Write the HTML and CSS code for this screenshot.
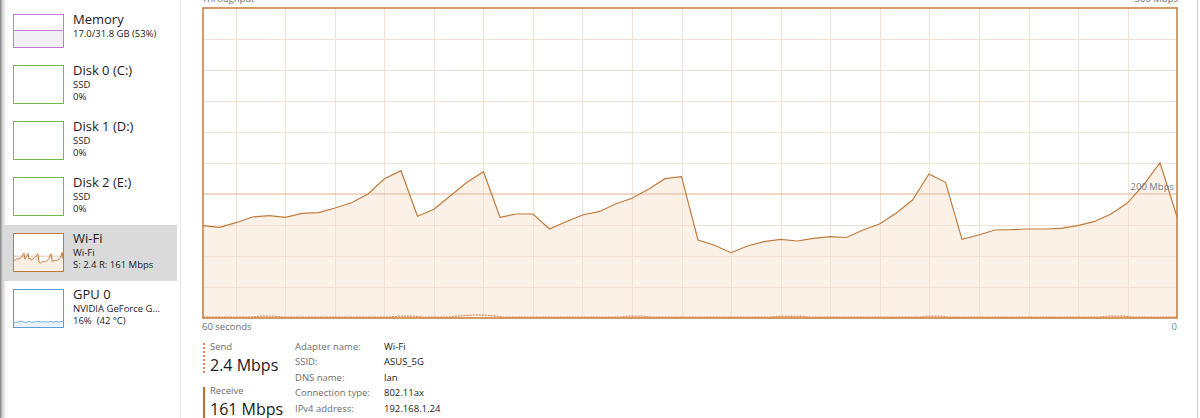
FILE: index.html
```html
<!DOCTYPE html>
<html lang="en">
<head>
  <meta charset="UTF-8">
  <title>Task Manager - Wi-Fi</title>
  <link rel="stylesheet" href="styles.css">
</head>
<body>

  <div class="app">
    <div class="sidebar">
      <div class="item item-mem">
        <div class="thumb thumb-mem"><div class="mem-used"></div></div>
        <div class="info">
          <div class="title">Memory</div>
          <div class="sub">17.0/31.8 GB (53%)</div>
        </div>
      </div>

      <div class="item">
        <div class="thumb thumb-disk"></div>
        <div class="info">
          <div class="title">Disk 0 (C:)</div>
          <div class="sub">SSD</div>
          <div class="sub">0%</div>
        </div>
      </div>

      <div class="item">
        <div class="thumb thumb-disk"></div>
        <div class="info">
          <div class="title">Disk 1 (D:)</div>
          <div class="sub">SSD</div>
          <div class="sub">0%</div>
        </div>
      </div>

      <div class="item">
        <div class="thumb thumb-disk"></div>
        <div class="info">
          <div class="title">Disk 2 (E:)</div>
          <div class="sub">SSD</div>
          <div class="sub">0%</div>
        </div>
      </div>

      <div class="item active">
        <div class="thumb thumb-net">
          <svg viewBox="0 0 976 312" preserveAspectRatio="none">
            <polygon class="mini-fill" points="1,218.7 17.5,220.3 34,215.7 50.5,210 67,208.7 83.5,210.3 100,206.3 116.5,205.7 133,201 149.5,195.7 166,187 182.5,171.7 199,163.7 215.5,209.3 232,202.3 248.5,188.7 265,175.3 281.5,164.7 298,210.3 314.5,207 331,207 347.5,222 364,214.7 380.5,208 397,204.7 413.5,197 430,191.3 446.5,182.3 463,171.7 479.5,169.7 496,233 512.5,238.3 529,245.7 545.5,239 562,234.7 578.5,232.3 595,234 611.5,231.3 628,229.7 644.5,230.5 661,223 677.5,217 694,206.3 710.5,193 727,167 743.5,175.3 760,232.3 776.5,228 793,223 809.5,222.7 826,222 842.5,222 859,221.3 875.5,218.7 892,214.7 908.5,207.3 925,196.3 941.5,178 958,155.7 975,209.7 975,312 1,312"/>
            <line class="mini-max" x1="0" y1="187" x2="976" y2="187"/>
            <polyline class="mini-line" points="1,218.7 17.5,220.3 34,215.7 50.5,210 67,208.7 83.5,210.3 100,206.3 116.5,205.7 133,201 149.5,195.7 166,187 182.5,171.7 199,163.7 215.5,209.3 232,202.3 248.5,188.7 265,175.3 281.5,164.7 298,210.3 314.5,207 331,207 347.5,222 364,214.7 380.5,208 397,204.7 413.5,197 430,191.3 446.5,182.3 463,171.7 479.5,169.7 496,233 512.5,238.3 529,245.7 545.5,239 562,234.7 578.5,232.3 595,234 611.5,231.3 628,229.7 644.5,230.5 661,223 677.5,217 694,206.3 710.5,193 727,167 743.5,175.3 760,232.3 776.5,228 793,223 809.5,222.7 826,222 842.5,222 859,221.3 875.5,218.7 892,214.7 908.5,207.3 925,196.3 941.5,178 958,155.7 975,209.7"/>
          </svg>
        </div>
        <div class="info">
          <div class="title">Wi-Fi</div>
          <div class="sub">Wi-Fi</div>
          <div class="sub">S: 2.4 R: 161 Mbps</div>
        </div>
      </div>

      <div class="item">
        <div class="thumb thumb-gpu">
          <svg viewBox="0 0 49 37" preserveAspectRatio="none">
            <polygon class="gpu-fill" points="0,32.5 3,32.2 5,31.6 7,31 9,32 12,32.3 15,31.6 18,32.2 21,31.9 24,31.4 27,32 30,31.7 33,32.1 36,31.5 39,32 42,31.6 45,32 49,31.2 49,37 0,37"/>
            <polyline class="gpu-line" points="0,32.5 3,32.2 5,31.6 7,31 9,32 12,32.3 15,31.6 18,32.2 21,31.9 24,31.4 27,32 30,31.7 33,32.1 36,31.5 39,32 42,31.6 45,32 49,31.2"/>
          </svg>
        </div>
        <div class="info">
          <div class="title">GPU 0</div>
          <div class="sub">NVIDIA GeForce G...</div>
          <div class="sub">16%&nbsp; (42 °C)</div>
        </div>
      </div>
    </div>

    <div class="main">
      <div class="chart-head">
        <span>Throughput</span>
        <span>300 Mbps</span>
      </div>

      <div class="chart">
        <svg width="976" height="312" viewBox="0 0 976 312">
          <polygon class="fill" points="1,218.7 17.5,220.3 34,215.7 50.5,210 67,208.7 83.5,210.3 100,206.3 116.5,205.7 133,201 149.5,195.7 166,187 182.5,171.7 199,163.7 215.5,209.3 232,202.3 248.5,188.7 265,175.3 281.5,164.7 298,210.3 314.5,207 331,207 347.5,222 364,214.7 380.5,208 397,204.7 413.5,197 430,191.3 446.5,182.3 463,171.7 479.5,169.7 496,233 512.5,238.3 529,245.7 545.5,239 562,234.7 578.5,232.3 595,234 611.5,231.3 628,229.7 644.5,230.5 661,223 677.5,217 694,206.3 710.5,193 727,167 743.5,175.3 760,232.3 776.5,228 793,223 809.5,222.7 826,222 842.5,222 859,221.3 875.5,218.7 892,214.7 908.5,207.3 925,196.3 941.5,178 958,155.7 975,209.7 975,311 1,311"/>

          <g class="grid">
            <line x1="34.5" y1="1" x2="34.5" y2="311"/>
            <line x1="83.5" y1="1" x2="83.5" y2="311"/>
            <line x1="133.5" y1="1" x2="133.5" y2="311"/>
            <line x1="182.5" y1="1" x2="182.5" y2="311"/>
            <line x1="232.5" y1="1" x2="232.5" y2="311"/>
            <line x1="281.5" y1="1" x2="281.5" y2="311"/>
            <line x1="331.5" y1="1" x2="331.5" y2="311"/>
            <line x1="380.5" y1="1" x2="380.5" y2="311"/>
            <line x1="430.5" y1="1" x2="430.5" y2="311"/>
            <line x1="480.5" y1="1" x2="480.5" y2="311"/>
            <line x1="529.5" y1="1" x2="529.5" y2="311"/>
            <line x1="579.5" y1="1" x2="579.5" y2="311"/>
            <line x1="628.5" y1="1" x2="628.5" y2="311"/>
            <line x1="678.5" y1="1" x2="678.5" y2="311"/>
            <line x1="727.5" y1="1" x2="727.5" y2="311"/>
            <line x1="777.5" y1="1" x2="777.5" y2="311"/>
            <line x1="827.5" y1="1" x2="827.5" y2="311"/>
            <line x1="876.5" y1="1" x2="876.5" y2="311"/>
            <line x1="926.5" y1="1" x2="926.5" y2="311"/>
            <line x1="1" y1="32.5" x2="975" y2="32.5"/>
            <line x1="1" y1="63.5" x2="975" y2="63.5"/>
            <line x1="1" y1="94.5" x2="975" y2="94.5"/>
            <line x1="1" y1="125.5" x2="975" y2="125.5"/>
            <line x1="1" y1="156.5" x2="975" y2="156.5"/>
            <line x1="1" y1="218.5" x2="975" y2="218.5"/>
            <line x1="1" y1="249.5" x2="975" y2="249.5"/>
            <line x1="1" y1="280.5" x2="975" y2="280.5"/>
          </g>

          <!-- 200 Mbps marker -->
          <line class="max-line" x1="1" y1="187" x2="975" y2="187"/>

          <!-- send (dotted) -->
          <polyline class="send-line" points="1,310 50,310 58,309.2 72,309.2 80,310 188,310 196,309.2 212,309.2 220,310 248,310 258,308.8 276,307.8 292,308.8 300,310 418,310 426,309.2 440,309.2 448,310 568,310 578,309.3 600,309.3 608,310 718,310 726,309.2 738,309.2 746,310 898,310 906,309.2 922,309.2 930,310 975,310"/>

          <!-- receive -->
          <polyline class="recv-line" points="1,218.7 17.5,220.3 34,215.7 50.5,210 67,208.7 83.5,210.3 100,206.3 116.5,205.7 133,201 149.5,195.7 166,187 182.5,171.7 199,163.7 215.5,209.3 232,202.3 248.5,188.7 265,175.3 281.5,164.7 298,210.3 314.5,207 331,207 347.5,222 364,214.7 380.5,208 397,204.7 413.5,197 430,191.3 446.5,182.3 463,171.7 479.5,169.7 496,233 512.5,238.3 529,245.7 545.5,239 562,234.7 578.5,232.3 595,234 611.5,231.3 628,229.7 644.5,230.5 661,223 677.5,217 694,206.3 710.5,193 727,167 743.5,175.3 760,232.3 776.5,228 793,223 809.5,222.7 826,222 842.5,222 859,221.3 875.5,218.7 892,214.7 908.5,207.3 925,196.3 941.5,178 958,155.7 975,209.7"/>

          <rect class="frame" x="1" y="1" width="974" height="310"/>
        </svg>
        <span class="max-label">200 Mbps</span>
      </div>

      <div class="chart-foot">
        <span>60 seconds</span>
        <span class="zero">0</span>
      </div>

      <div class="stats">
        <div class="rates">
          <div class="rate send">
            <div class="rate-label">Send</div>
            <div class="rate-value">2.4 Mbps</div>
          </div>
          <div class="rate recv">
            <div class="rate-label">Receive</div>
            <div class="rate-value">161 Mbps</div>
          </div>
        </div>

        <div class="props">
          <span class="key">Adapter name:</span><span class="val">Wi-Fi</span>
          <span class="key">SSID:</span><span class="val">ASUS_5G</span>
          <span class="key">DNS name:</span><span class="val">lan</span>
          <span class="key">Connection type:</span><span class="val">802.11ax</span>
          <span class="key">IPv4 address:</span><span class="val">192.168.1.24</span>
        </div>
      </div>
    </div>
  </div>

</body>
</html>
```

FILE: styles.css
```css
body {
  margin: 0;
  font-family: "Open Sans", "Noto Sans", sans-serif;
  color: #1b1b1b;
  background: #fff;
  overflow: hidden;
}

.app {
  display: flex;
  width: 1197px;
  height: 418px;
  border-right: 1px solid #cfcfcf;
  overflow: hidden;
}

/* left list */
.sidebar {
  width: 181px;
  flex-shrink: 0;
  border-right: 1px solid #e6e6e6;
  padding: 6px 3px 0 4px;
  box-sizing: border-box;
  background: linear-gradient(to right, #7c7c7c 0, #c8c8c8 2px, #f2f2f2 5px, #fff 8px);
}
.item {
  display: flex;
  align-items: flex-start;
  height: 56px;
  padding: 8px 0 0 9px;
  box-sizing: border-box;
}
.item-mem {
  height: 51px;
}
.item.active {
  background: #dadada;
}
.thumb {
  width: 51px;
  height: 39px;
  box-sizing: border-box;
  border: 1px solid;
  flex-shrink: 0;
  background: #fff;
}
.thumb svg {
  display: block;
  width: 49px;
  height: 37px;
}
.thumb-mem {
  height: 34px;
  border-color: #bf7dd3;
  display: flex;
  flex-direction: column;
}
.mem-used {
  margin-top: 15px;
  flex: 1;
  border-top: 1px solid #bf7dd3;
  background: #f0eff1;
}
.thumb-disk {
  border-color: #74bb4c;
}
.thumb-net {
  border-color: #c27a3c;
}
.thumb-gpu {
  border-color: #5d9fd3;
}
.mini-fill {
  fill: #fbeee2;
}
.mini-max {
  stroke: #e6c4a4;
  stroke-width: 1;
  vector-effect: non-scaling-stroke;
}
.mini-line {
  fill: none;
  stroke: #c27a3c;
  stroke-width: 1;
  vector-effect: non-scaling-stroke;
}
.gpu-fill {
  fill: #e9f2fa;
}
.gpu-line {
  fill: none;
  stroke: #5d9fd3;
  stroke-width: 0.8;
}
.info {
  margin: -3px 0 0 9px;
  white-space: nowrap;
}
.title {
  font-size: 13px;
  line-height: 17px;
}
.sub {
  font-size: 9.5px;
  line-height: 12.4px;
}

/* chart area */
.main {
  flex: 1;
  padding-left: 21px;
}
.chart-head,
.chart-foot {
  display: flex;
  justify-content: space-between;
  width: 976px;
  font-size: 9.5px;
  line-height: 13px;
  color: #6d6d6d;
}
.chart-head {
  margin-top: -8px;
}
.chart {
  position: relative;
  margin-top: 2px;
  width: 976px;
  height: 312px;
}
.chart svg {
  display: block;
}
.fill {
  fill: #fcf1e7;
}
.grid line {
  stroke: #f3e2d4;
  stroke-width: 1;
}
.max-line {
  stroke: #dfb48e;
  stroke-width: 1.2;
}
.send-line {
  fill: none;
  stroke: #e2894b;
  stroke-width: 1.2;
  stroke-dasharray: 2 1;
}
.recv-line {
  fill: none;
  stroke: #c27a3c;
  stroke-width: 1.2;
}
.frame {
  fill: none;
  stroke: #c47b3a;
  stroke-width: 1.5;
}
.max-label {
  position: absolute;
  right: 4px;
  top: 173px;
  font-size: 9.5px;
  line-height: 13px;
  color: #6f7f91;
}
.chart-foot {
  margin-top: 1px;
}
.zero {
  padding-right: 1px;
  color: #6f8399;
}

/* numbers under the chart */
.stats {
  display: flex;
  align-items: flex-start;
  margin-top: 5.6px;
  margin-left: 1px;
}
.rates {
  width: 92px;
}
.rate {
  padding-left: 5px;
  box-sizing: border-box;
}
.send {
  margin-top: 4.4px;
  height: 30px;
  border-left: 2px dotted #e5844a;
}
.recv {
  margin-top: 13.7px;
  height: 60px;
  border-left: 2px solid #c4692f;
}
.rate-label {
  font-size: 9.5px;
  line-height: 8px;
  color: #6d6d6d;
}
.rate-value {
  margin-top: 4.5px;
  font-size: 16px;
  line-height: 20px;
  white-space: nowrap;
}
.props {
  display: grid;
  grid-template-columns: 89px auto;
  align-content: start;
  font-size: 9.5px;
  line-height: 15.5px;
}
.key {
  color: #6d6d6d;
  white-space: nowrap;
}
.val {
  color: #1b1b1b;
}
```
